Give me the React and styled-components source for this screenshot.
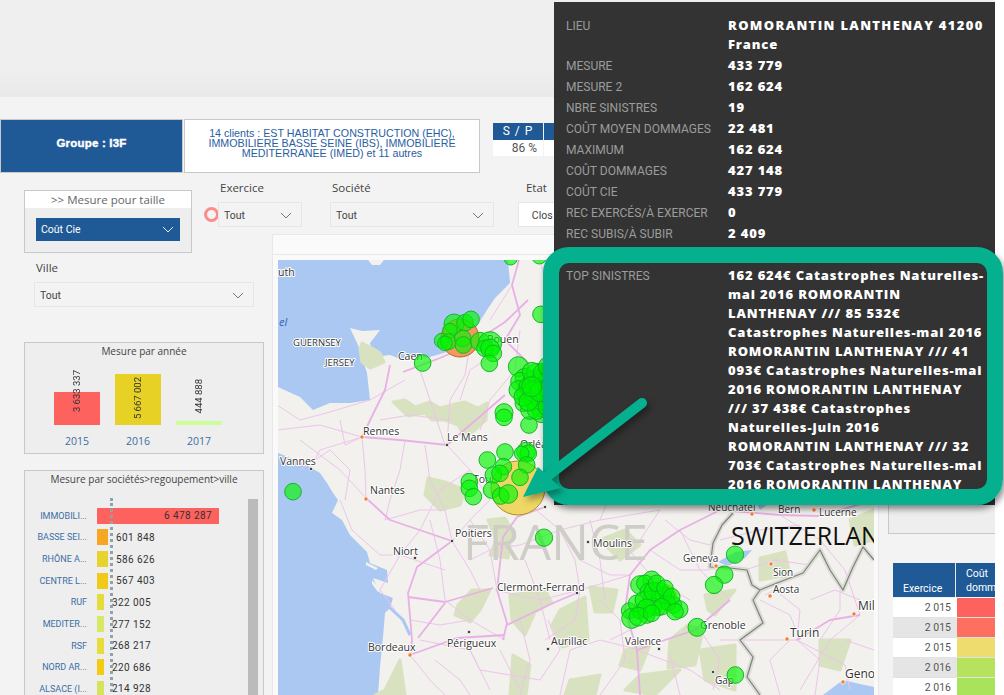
import React from "react";
import styled, { createGlobalStyle } from "styled-components";

const GlobalStyle = createGlobalStyle`
  html, body { margin: 0; padding: 0; background: #fff; }
  #root { width: 1004px; height: 695px; overflow: hidden; }
`;

const BLUE = "#1f5a96";
const TEAL = "#05b08e";

const Screen = styled.div`
  position: relative;
  width: 1004px;
  height: 695px;
  overflow: hidden;
  display: flex;
  flex-direction: column;
  font-family: "Open Sans", "Noto Sans", sans-serif;
  color: #444;
`;
const TopGap = styled.div`
  height: 97px;
  flex: none;
  width: 995px;
  background: linear-gradient(#efefef 70%, #e9e9e9);
`;
const Report = styled.div`
  width: 995px;
  height: 598px;
  background: #f3f3f3;
  overflow: hidden;
`;
const HeaderRow = styled.div`
  display: flex;
  align-items: flex-start;
  padding-top: 22px;
`;
const GroupCard = styled.div`
  width: 183px;
  height: 54px;
  box-sizing: border-box;
  border: 1px solid #c8c8c8;
  background: ${BLUE};
  color: #fff;
  font: bold 11.5px/47px "Liberation Sans", sans-serif;
  -webkit-text-stroke: 0.4px #fff;
  letter-spacing: 0.2px;
  text-align: center;
`;
const ClientsCard = styled.div`
  width: 296px;
  height: 54px;
  margin-left: 1px;
  box-sizing: border-box;
  border: 1px solid #c8c8c8;
  background: #fff;
  color: #2a5ea2;
  font: 10.7px/10px "Liberation Sans", sans-serif;
  text-align: center;
  padding-top: 8px;
`;
const Kpis = styled.div`
  display: flex;
  margin: 4px 0 0 13px;
`;
const KpiCell = styled.div`
  width: 50px;
  margin-right: 1px;
  background: #fff;
  font: 12px/16px Roboto, sans-serif;
  color: #555;
  text-align: right;
`;
const KpiHead = styled.div`
  height: 17px;
  background: ${BLUE};
  color: #fff;
  font: 12px/17px Roboto, sans-serif;
  letter-spacing: 1px;
  text-align: center;
`;
const KpiValue = styled.div`
  padding-right: 6px;
`;
const ControlsRow = styled.div`
  display: flex;
  align-items: flex-start;
  height: 73px;
  margin: 7px 0 -19px 24px;
`;
const MesureBox = styled.div`
  width: 168px;
  height: 63px;
  margin-top: 10px;
  flex: none;
  box-sizing: border-box;
  border: 1px solid #c8c8c8;
  background: #eee;
`;
const MesureTitle = styled.div`
  height: 17px;
  background: #fff;
  font: 11.5px/17px "Open Sans", sans-serif;
  color: #666;
  text-align: center;
`;
const MesureSelect = styled.div`
  margin: 10px 11px 0;
  height: 23px;
  padding: 0 6px 0 5px;
  display: flex;
  align-items: center;
  justify-content: space-between;
  background: ${BLUE};
  color: #fff;
  font: 10.5px Roboto, sans-serif;
`;
const Ring = styled.div`
  width: 15px;
  height: 15px;
  flex: none;
  box-sizing: border-box;
  margin: 27px -1px 0 12px;
  border: 3px solid #fb8c8c;
  border-radius: 50%;
`;
const Filter = styled.div`
  position: relative;
  width: ${(p) => p.$width}px;
  margin-left: ${(p) => p.$gap}px;
  flex: none;
`;
const FilterLabel = styled.div`
  height: 22px;
  padding-left: 2px;
  font: 11.5px/16px "Open Sans", sans-serif;
  color: #444;
`;
const SelectBox = styled.div`
  height: 25px;
  box-sizing: border-box;
  padding: 1px 9px 0 5px;
  display: flex;
  align-items: center;
  justify-content: space-between;
  border: 1px solid #e6e6e6;
  background: ${(p) => (p.$white ? "#fff" : "#f3f3f3")};
  font: 10.5px Roboto, sans-serif;
  color: #444;
`;
const BodyRow = styled.div`
  display: flex;
  align-items: flex-start;
  height: 461px;
`;
const LeftCol = styled.div`
  width: 272px;
  height: 100%;
  flex: none;
  box-sizing: border-box;
  padding: 26px 0 0 24px;
  display: flex;
  flex-direction: column;
`;
const VilleFilter = styled.div`
  margin-left: 10px;
  width: 220px;
  flex: none;
`;
const ChartBox = styled.div`
  position: relative;
  width: 240px;
  flex: none;
  box-sizing: border-box;
  border: 1px solid #c8c8c8;
  background: #eee;
  overflow: hidden;
`;
const YearBox = styled(ChartBox)`
  height: 112px;
  margin-top: 35px;
`;
const SocietyBox = styled(ChartBox)`
  height: 240px;
  margin-top: 16px;
`;
const ChartTitle = styled.div`
  font: 10px/16px "Open Sans", sans-serif;
  color: #444;
  text-align: center;
  white-space: nowrap;
`;
const YearBars = styled.div`
  display: flex;
  gap: 15px;
  padding-left: 29px;
  height: 51px;
  margin-top: 15px;
  align-items: flex-end;
`;
const YearCol = styled.div`
  position: relative;
  width: 46px;
  height: ${(p) => p.$height}px;
  background: ${(p) => p.$color};
`;
const YearValue = styled.span`
  position: absolute;
  left: 50%;
  bottom: ${(p) => p.$bottom}px;
  margin-left: -7px;
  writing-mode: vertical-rl;
  transform: rotate(180deg);
  font: 9.5px/14px Roboto, sans-serif;
  color: #333;
  white-space: nowrap;
`;
const YearAxis = styled.div`
  display: flex;
  gap: 15px;
  padding: 8px 0 0 29px;
`;
const YearTick = styled.div`
  width: 46px;
  text-align: center;
  font: 10.5px/16px "Open Sans", sans-serif;
  color: #3a6ea5;
`;
const SocietyRows = styled.div`
  padding-top: 18px;
`;
const SocietyRow = styled.div`
  display: flex;
  align-items: center;
  height: 21.65px;
`;
const SocietyName = styled.div`
  width: 62px;
  flex: none;
  text-align: right;
  font: 9px Roboto, sans-serif;
  color: #3a6ea5;
  white-space: nowrap;
`;
const SocietyBar = styled.div`
  height: 16px;
  margin-left: 10px;
  flex: none;
  box-sizing: border-box;
  padding-right: 7px;
  background: ${(p) => p.$color};
  font: 10px/16px Roboto, sans-serif;
  letter-spacing: 0.4px;
  color: #333;
  text-align: right;
`;
const SocietyValue = styled.div`
  margin-left: 8px;
  font: 10px Roboto, sans-serif;
  letter-spacing: 0.4px;
  color: #333;
`;
const DottedLine = styled.div`
  position: absolute;
  left: 85px;
  top: 27px;
  bottom: 0;
  border-left: 3px dotted #8fa3a8;
`;
const ScrollThumb = styled.div`
  position: absolute;
  right: 5px;
  top: 28px;
  bottom: 0;
  width: 10px;
  background: #bbb;
`;
const MapPanel = styled.div`
  width: 607px;
  height: 100%;
  flex: none;
  box-sizing: border-box;
  background: #fafafa;
  border: 1px solid #e8e8e8;
  border-bottom: 0;
`;
const MapHeader = styled.div`
  height: 19px;
  border-bottom: 1px solid #e8e8e8;
  margin-bottom: 5px;
`;
const MapFrame = styled.svg`
  display: block;
  margin-left: 5px;
  font-family: "Open Sans", sans-serif;
  text {
    paint-order: stroke;
    stroke: #fff;
    stroke-width: 2px;
    stroke-linejoin: round;
    fill: #333;
    font-size: 10.5px;
  }
`;
const RightCol = styled.div`
  margin-left: 9px;
  flex: 1;
  min-width: 0;
`;
const SideCard = styled.div`
  height: 124px;
  margin-top: 176px;
  box-sizing: border-box;
  border: 1px solid #c8c8c8;
  border-right: 0;
  background: #eee;
`;
const Table = styled.div`
  margin: 29px 0 0 5px;
  overflow: hidden;
`;
const TableHead = styled.div`
  display: flex;
  height: 34px;
  margin-bottom: 1px;
  background: ${BLUE};
  color: #fff;
  font: 10.5px/14px Roboto, sans-serif;
`;
const HeadYear = styled.div`
  width: 63px;
  flex: none;
  box-sizing: border-box;
  padding: 19px 0 0 10px;
  border-right: 1px solid #e8e8e8;
`;
const HeadCost = styled.div`
  padding: 4px 0 0 10px;
  white-space: nowrap;
`;
const TableRow = styled.div`
  display: flex;
  height: 20px;
  background: ${(p) => (p.$alt ? "#e5e5e5" : "#fff")};
  border-bottom: 1px solid #e2e2e2;
  box-sizing: border-box;
`;
const YearCell = styled.div`
  width: 58px;
  flex: none;
  padding-right: 5px;
  text-align: right;
  font: 10.5px/20px Roboto, sans-serif;
  color: #555;
`;
const CostCell = styled.div`
  flex: 1;
  margin-left: 1px;
  background: ${(p) => p.$color};
`;
const Tooltip = styled.div`
  position: absolute;
  left: 554px;
  top: 2px;
  width: 441px;
  height: 503px;
  box-sizing: border-box;
  padding: 13px 0 0 12px;
  background: #333;
  overflow: hidden;
`;
const TipRow = styled.div`
  display: grid;
  grid-template-columns: 162px 1fr;
  padding: 1px 0;
  min-height: 19px;
`;
const TipLabel = styled.div`
  margin-top: 1px;
  font: 12px/18px Roboto, sans-serif;
  color: #9c9c9c;
  white-space: nowrap;
`;
const TipValue = styled.div`
  font: 800 13px/19px "Open Sans", sans-serif;
  letter-spacing: 0.85px;
  color: #fff;
  white-space: nowrap;
`;
const TipCaps = styled.span`
  letter-spacing: 1.35px;
`;
const Callout = styled.div`
  position: absolute;
  left: 543px;
  top: 247px;
  width: 460px;
  height: 258px;
  box-sizing: border-box;
  border: 16px solid ${TEAL};
  border-radius: 26px;
  box-shadow: 2px 4px 6px rgba(0, 0, 0, 0.45);
`;
const ArrowLayer = styled.svg`
  position: absolute;
  left: 0;
  top: 0;
  filter: drop-shadow(3px 4px 3px rgba(0, 0, 0, 0.35));
`;

const Chevron = ({ color = "#666" }) => (
  <svg width="12" height="7" viewBox="0 0 12 7" fill="none" stroke={color} strokeWidth="0.9">
    <path d="M1 1l5 5 5-5" />
  </svg>
);

const societies = [
  ["IMMOBILI...", 122, "#fd625e", "6 478 287"],
  ["BASSE SEI...", 11, "#f5a623", "601 848"],
  ["RHÔNE A...", 11, "#e8d22e", "586 626"],
  ["CENTRE L...", 11, "#f0ca16", "567 403"],
  ["RUF", 6, "#e3dc3a", "322 005"],
  ["MEDITER...", 5, "#d6e866", "277 152"],
  ["RSF", 5, "#e6dc3c", "268 217"],
  ["NORD AR...", 4, "#f2cc14", "220 686"],
  ["ALSACE (I...", 4, "#d6e45c", "214 928"],
];

const tableRows = [
  ["2 015", "#fd625e"],
  ["2 015", "#fd6f5f"],
  ["2 015", "#efdc6e"],
  ["2 016", "#b7e25d"],
  ["2 016", "#a9e35c"],
];

const tipRows = [
  ["MESURE", "433 779"],
  ["MESURE 2", "162 624"],
  ["NBRE SINISTRES", "19"],
  ["COÛT MOYEN DOMMAGES", "22 481"],
  ["MAXIMUM", "162 624"],
  ["COÛT DOMMAGES", "427 148"],
  ["COÛT CIE", "433 779"],
  ["REC EXERCÉS/À EXERCER", "0"],
  ["REC SUBIS/À SUBIR", "2 409"],
];

const topLines = [
  "162 624€ Catastrophes Naturelles-",
  "mai 2016 ROMORANTIN",
  "LANTHENAY /// 85 532€",
  "Catastrophes Naturelles-mai 2016",
  "ROMORANTIN LANTHENAY /// 41",
  "093€ Catastrophes Naturelles-mai",
  "2016 ROMORANTIN LANTHENAY",
  "/// 37 438€ Catastrophes",
  "Naturelles-juin 2016",
  "ROMORANTIN LANTHENAY /// 32",
  "703€ Catastrophes Naturelles-mai",
  "2016 ROMORANTIN LANTHENAY",
];

// bubbles were read off 3x crops of the map, so scale them back here
const crop = (list, ox, oy) => list.map(([x, y, r]) => [x / 3 + ox, y / 3 + oy, r / 3]);

const bubbles = [
  ...crop([[722, 55, 20], [808, 50, 22], [552, 252, 30], [585, 248, 25], [603, 238, 25], [540, 272, 22], [515, 302, 22], [535, 305, 24], [525, 310, 22], [578, 295, 25], [580, 315, 25], [630, 305, 28], [660, 310, 35], [645, 325, 25], [660, 325, 28], [670, 340, 25], [658, 370, 25], [458, 369, 25], [745, 380, 30], [813, 223, 25], [702, 518, 27], [702, 532, 25], [777, 555, 25]], 270, 240),
  ...crop([[765, 415, 30], [750, 425, 28], [790, 420, 30], [770, 460, 30], [800, 450, 30], [760, 490, 25], [810, 500, 30], [790, 480, 28], [820, 440, 30], [800, 400, 30], [815, 520, 28], [780, 510, 28], [840, 470, 30], [840, 420, 30], [745, 450, 28], [775, 440, 28], [805, 430, 30], [785, 395, 28], [820, 400, 30], [825, 470, 30], [800, 510, 28], [760, 470, 28], [790, 455, 30], [815, 480, 30], [775, 485, 28], [835, 380, 30], [835, 445, 30], [835, 500, 30], [810, 455, 30], [785, 440, 30]], 270, 240),
  ...crop([[705, 636, 25], [652, 660, 25], [768, 635, 28], [775, 640, 25], [755, 640, 22], [770, 675, 25], [750, 712, 25], [700, 680, 25], [670, 705, 25], [690, 700, 25], [598, 725, 25], [598, 745, 25]], 270, 240),
  ...crop([[69, 35, 25], [610, 50, 25], [665, 30, 25], [692, 48, 25], [715, 42, 28], [822, 173, 26]], 270, 480),
  ...crop([[185, 300, 27], [150, 315, 28], [165, 310, 25], [175, 335, 25], [210, 335, 28], [230, 350, 25], [185, 360, 27], [210, 355, 25], [118, 392, 24], [125, 415, 30], [150, 395, 22], [170, 405, 25], [190, 380, 25], [205, 385, 22], [250, 375, 25], [268, 388, 26], [235, 370, 22], [220, 345, 25], [140, 370, 25], [160, 360, 25], [190, 335, 28], [200, 310, 25], [225, 325, 25], [245, 350, 25], [215, 380, 25], [170, 385, 28], [145, 410, 28], [185, 400, 25], [255, 395, 25], [435, 224, 26], [403, 284, 26], [372, 315, 26], [321, 442, 27], [436, 585, 25]], 590, 480),
];

const majorRoads = [
  "M403 372L440 358L470 345L505 322L528 300",
  "M519 260L512 285L520 315L505 340L530 365",
  "M390 365L385 390L375 410L362 437",
  "M362 437L400 440L447 445L470 425L505 395",
  "M366 498L390 520L452 541",
  "M452 541L417 567L408 593L412 640L410 655",
  "M445 603L418 638",
  "M408 597L445 602L493 588",
  "M545 507L517 517L503 537L497 590L507 623L503 640",
  "M577 593L553 603L507 625",
  "M505 635L457 638L410 655",
  "M630 575L650 550L680 530L720 510",
  "M630 575L625 610L637 650L640 695",
  "M637 650L665 640L695 630L730 600",
  "M797 640L830 620L860 615",
  "M720 510L780 515L820 516L874 500",
];

const minorRoads = [
  "M447 445L450 400L465 375L470 345",
  "M362 437L365 470L366 498",
  "M277 430L320 425L362 437",
  "M362 437L320 450L310 468",
  "M277 405L300 420L330 412L370 400L405 380",
  "M452 541L470 520L490 500",
  "M447 445L470 470L490 500",
  "M410 655L430 680L445 695",
  "M495 590L540 600L580 590L630 575",
  "M580 590L575 560L560 530L530 505",
  "M545 640L575 620L580 590",
  "M637 650L690 670L720 690",
  "M730 600L700 570L680 530",
  "M797 640L800 610L775 590L765 595",
  "M797 640L845 665L850 690",
  "M860 615L845 570L820 540L780 515",
  "M660 510L640 540L625 560",
  "M560 530L600 520L660 510",
  "M340 500L352 530L380 555L400 555",
  "M400 555L380 590L395 610",
  "M445 600L470 620L505 640",
  "M420 640L470 650L490 690",
  "M560 695L570 650L600 640L640 650",
  "M600 520L620 470",
  "M720 640L760 640L797 640",
  "M800 690L830 640L860 615",
  "M300 440L340 470L366 498",
  "M470 470L440 490L420 530L400 555",
  "M500 650L520 690",
  "M620 540L655 580L690 600",
  "M420 370L430 400L445 445",
  "M380 420L410 415L450 420",
  "M340 420L345 445L362 437",
  "M300 470L330 450L350 470L345 500",
  "M405 440L400 470L390 500L385 520",
  "M425 445L430 480L445 510L452 541",
  "M385 520L420 510L445 510",
  "M400 555L445 570",
  "M430 520L440 560L445 600",
  "M470 520L490 550L497 590",
  "M470 560L490 550L520 545L560 530",
  "M452 541L470 570L480 590",
  "M410 620L440 625L470 620",
  "M435 660L460 680L470 695",
  "M470 650L480 670L540 680",
  "M540 680L560 650L548 620",
  "M525 560L540 600L550 640",
  "M520 620L530 660L520 695",
  "M580 560L610 575L630 575",
  "M600 600L620 620L625 660L600 695",
  "M590 520L600 560L605 600",
  "M650 550L680 570L710 570",
  "M665 520L690 540L710 545",
  "M610 640L640 625",
  "M670 655L680 695",
  "M700 630L720 660L713 690",
  "M720 540L760 530L800 525",
  "M745 570L775 560L810 565",
  "M760 600L790 615L800 640",
  "M790 640L770 660L780 695",
  "M810 600L835 590L860 600",
  "M820 640L840 610L840 590",
  "M797 640L820 660L815 695",
  "M845 640L874 650",
  "M540 260L550 300",
  "M512 285L490 320",
  "M500 350L470 370L460 400",
  "M520 330L515 370L490 400L480 430",
];

const forests = [
  "M362 343L372 348L380 353L384 362L370 368L362 362L360 350Z",
  "M393 402L405 400L415 407L430 402L440 408L455 404L465 402L478 408L487 403L486 420L475 430L465 437L458 425L445 420L432 420L425 413L408 416Z",
  "M428 478L445 482L465 490L460 505L440 510L425 495Z",
  "M488 520L505 518L512 530L508 558L490 555L496 540Z",
  "M472 590L490 590L480 610L470 622L455 615L458 605Z",
  "M510 595L545 590L552 603L535 612L525 635L512 620Z",
  "M560 610L585 597L588 640L562 647L552 625Z",
  "M400 660L385 690L375 695L405 695Z",
  "M513 655L530 665L526 695L510 695Z",
  "M570 680L600 675L595 695L565 695Z",
  "M590 587L617 590L612 612L595 612Z",
  "M670 640L688 625L703 630L695 665L668 668Z",
  "M705 595L735 590L715 615L708 610Z",
  "M625 650L650 645L640 670L620 665Z",
  "M700 650L735 645L735 690L705 680Z",
  "M640 675L680 670L655 695L625 690Z",
  "M760 558L785 552L790 575L760 580Z",
  "M850 520L874 510L874 540L855 545Z",
  "M820 640L850 640L840 670L820 665Z",
  "M600 540L625 530L640 545L620 560Z",
];

const cities = [
  [362, 437, "#f57c3a"], [447, 445, "#444"], [311, 469, "#444"], [366, 499, "#f57c3a"],
  [452, 541, "#444"], [415, 558, "#444"], [577, 593, "#444"], [469, 632, "#444"],
  [410, 655, "#f57c3a"], [548, 649, "#444"], [588, 542, "#444"], [545, 507, "#444"],
  [716, 566, "#f57c3a"], [771, 564, "#f57c3a"], [770, 596, "#f57c3a"], [787, 639, "#f57c3a"],
  [854, 614, "#f57c3a"], [843, 682, "#f57c3a"], [659, 649, "#444"], [713, 672, "#444"],
  [752, 514, "#f57c3a"], [814, 510, "#f57c3a"],
];

const labels = [
  ["uth", 278, 276], ["GUERNSEY", 293, 346, 9.5], ["JERSEY", 325, 366, 9.5], ["Caen", 398, 360],
  ["Rouen", 487, 343], ["Rennes", 363, 435], ["Le Mans", 447, 441], ["Vannes", 280, 465],
  ["Nantes", 370, 494], ["Tours", 473, 483], ["Orléans", 520, 448], ["Poitiers", 455, 537],
  ["Niort", 393, 555], ["Clermont-Ferrand", 497, 591], ["Périgueux", 447, 647], ["Bordeaux", 368, 651],
  ["Aurillac", 551, 645], ["Moulins", 593, 547], ["Geneva", 683, 562, 10], ["Sion", 773, 576, 10],
  ["Aosta", 773, 593, 10], ["Grenoble", 700, 629], ["Valence", 625, 645, 10], ["Turin", 790, 637, 12],
  ["Mil", 858, 610, 12], ["Geno", 845, 678, 12], ["Gap", 715, 684, 10], ["Neuchâtel", 708, 511, 10],
  ["Bern", 778, 513, 10], ["Lucerne", 819, 516, 10],
];

const BORDER =
  "M733 513L722 525L713 543L710 567L730 568L747 570L752 585L760 590L753 600L763 623L740 640L753 657L747 677L760 695M760 590L777 583L803 573L820 550L830 570L843 590L853 567L863 547L874 560";

const FranceMap = () => (
  <MapFrame width="596" height="435" viewBox="278 260 596 435">
    <rect x="278" y="260" width="596" height="435" fill="#abc8f2" />
    {/* land */}
    <path
      fill="#f2f1ed"
      d="M508 260L510 283L495 298L487 310L470 337L447 352L430 357L403 360L390 355L373 357L370 343L380 330L362 331L350 328L358 345L367 373L370 400L350 403L330 403L313 410L300 397L278 387L278 453L303 463L320 473L327 483L333 493L338 500L332 513L342 520L350 535L367 552L370 563L387 570L388 583L373 578L380 593L393 598L390 608L385 613L383 637L380 667L378 695L874 695L874 260Z"
    />
    <path fill="#f2f1ed" d="M368 260L384 260L380 265L372 265Z" />
    <path fill="#f2f1ed" d="M366 562L378 568L376 570L366 565ZM372 580L382 590L378 592L372 584Z" />
    <path fill="#abc8f2" d="M823 695L843 680L860 684L874 687L874 695Z" />
    <path fill="#abc8f2" d="M718 562L735 552L752 550L745 558L728 566Z" />
    <path fill="#abc8f2" d="M757 504L776 494L770 503L760 510Z" />
    <path fill="none" stroke="#abc8f2" strokeWidth="3" d="M388 606L403 620L410 635" />
    <g stroke="#d9e2c0" strokeWidth="3" strokeLinejoin="round" fill="#d9e2c0">
      {forests.map((d, i) => (
        <path key={i} d={d} />
      ))}
    </g>
    <g fill="none" stroke="#edc4ec" strokeWidth="1" strokeLinejoin="round">
      {minorRoads.map((d, i) => (
        <path key={i} d={d} />
      ))}
    </g>
    <g fill="none" stroke="#e8b0e6" strokeWidth="1.8" strokeLinejoin="round">
      {majorRoads.map((d, i) => (
        <path key={i} d={d} />
      ))}
    </g>
    {/* swiss and italian border */}
    <g fill="none" strokeLinejoin="round">
      <path stroke="#dcdcd6" strokeWidth="5" d={BORDER} />
      <path stroke="#80807c" strokeWidth="1.2" d={BORDER} />
    </g>
    {cities.map(([x, y, c], i) => (
      <circle key={i} cx={x} cy={y} r={c === "#444" ? 1.8 : 2.2} fill={c} stroke="#fff" strokeWidth="0.8" />
    ))}
    <text x="463" y="560" textLength="185" style={{ fontSize: 50, fill: "#cfcdc7", stroke: "none" }}>
      FRANCE
    </text>
    <text x="731" y="545" style={{ fontSize: 25, fill: "#111", stroke: "none" }}>
      SWITZERLAND
    </text>
    <text x="279" y="326" style={{ fontStyle: "italic", fill: "#3a62b0", stroke: "none", fontSize: 11 }}>
      el
    </text>
    {labels.map(([t, x, y, size]) => (
      <text key={t} x={x} y={y} style={size ? { fontSize: size } : undefined}>
        {t}
      </text>
    ))}
    {/* bigger bubbles sit under the green ones */}
    <circle cx="460" cy="338" r="19" fill="#f09a5e" stroke="#c0601e" />
    <circle cx="547" cy="378" r="13" fill="#e0305a" stroke="#a01040" />
    <circle cx="518" cy="488" r="27" fill="#efd765" stroke="#a98f22" />
    <circle cx="664" cy="597" r="13" fill="#d8c850" />
    {bubbles.map(([x, y, r], i) => (
      <circle key={i} cx={x} cy={y} r={r} fill="rgba(0,245,0,0.64)" stroke="#17b528" strokeWidth="1" />
    ))}
  </MapFrame>
);

export default function App() {
  return (
    <Screen>
      <GlobalStyle />
      <TopGap />
      <Report>
        <HeaderRow>
          <GroupCard>Groupe : I3F</GroupCard>
          <ClientsCard>
            14 clients : EST HABITAT CONSTRUCTION (EHC),
            <br />
            IMMOBILIERE BASSE SEINE (IBS), IMMOBILIERE
            <br />
            MEDITERRANEE (IMED) et 11 autres
          </ClientsCard>
          <Kpis>
            <KpiCell>
              <KpiHead>S / P</KpiHead>
              <KpiValue>86 %</KpiValue>
            </KpiCell>
            <KpiCell>
              <KpiHead />
            </KpiCell>
          </Kpis>
        </HeaderRow>

        <ControlsRow>
          <MesureBox>
            <MesureTitle>&gt;&gt; Mesure pour taille</MesureTitle>
            <MesureSelect>
              Coût Cie
              <Chevron color="#fff" />
            </MesureSelect>
          </MesureBox>
          <Ring />
          <Filter $width={84} $gap={0}>
            <FilterLabel>Exercice</FilterLabel>
            <SelectBox>
              Tout
              <Chevron />
            </SelectBox>
          </Filter>
          <Filter $width={164} $gap={28}>
            <FilterLabel>Société</FilterLabel>
            <SelectBox>
              Tout
              <Chevron />
            </SelectBox>
          </Filter>
          <Filter $width={90} $gap={24}>
            <FilterLabel>&nbsp;&nbsp;Etat</FilterLabel>
            <SelectBox $white>&nbsp;&nbsp;&nbsp;Clos</SelectBox>
          </Filter>
        </ControlsRow>

        <BodyRow>
          <LeftCol>
            <VilleFilter>
              <FilterLabel>Ville</FilterLabel>
              <SelectBox>
                Tout
                <Chevron />
              </SelectBox>
            </VilleFilter>
            <YearBox>
              <ChartTitle>Mesure par année</ChartTitle>
              <YearBars>
                <YearCol $height={33} $color="#fd625e">
                  <YearValue $bottom={13}>3 633 337</YearValue>
                </YearCol>
                <YearCol $height={51} $color="#e8d125">
                  <YearValue $bottom={6}>5 667 002</YearValue>
                </YearCol>
                <YearCol $height={4} $color="#ccff99">
                  <YearValue $bottom={12}>444 888</YearValue>
                </YearCol>
              </YearBars>
              <YearAxis>
                <YearTick>2015</YearTick>
                <YearTick>2016</YearTick>
                <YearTick>2017</YearTick>
              </YearAxis>
            </YearBox>
            <SocietyBox>
              <ChartTitle>Mesure par sociétés&gt;regoupement&gt;ville</ChartTitle>
              <SocietyRows>
                {societies.map(([name, width, color, value], i) => (
                  <SocietyRow key={name}>
                    <SocietyName>{name}</SocietyName>
                    <SocietyBar style={{ width }} $color={color}>
                      {i === 0 ? value : ""}
                    </SocietyBar>
                    {i > 0 && <SocietyValue>{value}</SocietyValue>}
                  </SocietyRow>
                ))}
              </SocietyRows>
              <DottedLine />
              <ScrollThumb />
            </SocietyBox>
          </LeftCol>
          <MapPanel>
            <MapHeader />
            <FranceMap />
          </MapPanel>
          <RightCol>
            <SideCard />
            <Table>
              <TableHead>
                <HeadYear>Exercice</HeadYear>
                <HeadCost>
                  Coût
                  <br />
                  dommages
                </HeadCost>
              </TableHead>
              {tableRows.map(([year, color], i) => (
                <TableRow key={i} $alt={i % 2 === 1}>
                  <YearCell>{year}</YearCell>
                  <CostCell $color={color} />
                </TableRow>
              ))}
            </Table>
          </RightCol>
        </BodyRow>
      </Report>

      <Tooltip>
        <TipRow>
          <TipLabel>LIEU</TipLabel>
          <TipValue>
            <TipCaps>ROMORANTIN LANTHENAY 41200</TipCaps>
            <br />
            France
          </TipValue>
        </TipRow>
        {tipRows.map(([label, value]) => (
          <TipRow key={label}>
            <TipLabel>{label}</TipLabel>
            <TipValue>{value}</TipValue>
          </TipRow>
        ))}
        <TipRow />
        <TipRow>
          <TipLabel>TOP SINISTRES</TipLabel>
          <TipValue>
            {topLines.map((line) => (
              <div key={line}>{line}</div>
            ))}
          </TipValue>
        </TipRow>
      </Tooltip>
      <Callout />
      <ArrowLayer width="1004" height="695" viewBox="0 0 1004 695">
        <path d="M642 403L540 482" stroke={TEAL} strokeWidth="10" strokeLinecap="round" />
        <path d="M523 497L538 467L561 488Z" fill={TEAL} />
      </ArrowLayer>
    </Screen>
  );
}
